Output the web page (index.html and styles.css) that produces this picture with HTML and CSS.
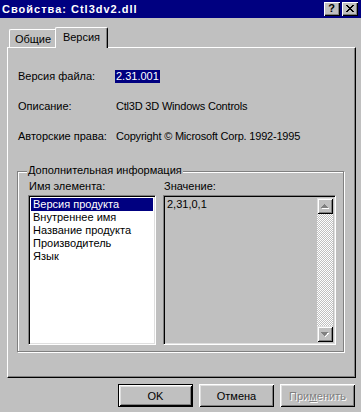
FILE: index.html
```html
<!DOCTYPE html>
<html lang="ru">
<head>
    <meta charset="UTF-8">
    <title>Свойства: Ctl3dv2.dll</title>
    <link rel="stylesheet" href="styles.css">
</head>
<body>
    <div class="dialog">
        <div class="titlebar">
            <span class="title">Свойства: Ctl3dv2.dll</span>
            <div class="caption-buttons">
                <button class="caption-btn help">?</button>
                <button class="caption-btn close">
                    <svg width="8" height="7" viewBox="0 0 8 7" shape-rendering="crispEdges">
                        <path d="M0 0h2v1h-2zM6 0h2v1h-2zM1 1h2v1h-2zM5 1h2v1h-2zM2 2h4v1h-4zM3 3h2v1h-2zM2 4h4v1h-4zM1 5h2v1h-2zM5 5h2v1h-2zM0 6h2v1h-2zM6 6h2v1h-2z" fill="#000"/>
                    </svg>
                </button>
            </div>
        </div>

        <div class="tabs">
            <div class="tab">Общие</div>
            <div class="tab active">Версия</div>
        </div>

        <div class="page">
            <div class="row">
                <span class="label">Версия файла:</span>
                <span class="value selected">2.31.001</span>
            </div>
            <div class="row">
                <span class="label">Описание:</span>
                <span class="value">Ctl3D 3D Windows Controls</span>
            </div>
            <div class="row">
                <span class="label">Авторские права:</span>
                <span class="value">Copyright © Microsoft Corp. 1992-1995</span>
            </div>

            <div class="group">
                <div class="group-title">Дополнительная информация</div>
                <div class="group-body">
                    <div class="col col-names">
                        <div class="col-label">Имя элемента:</div>
                        <ul class="listbox">
                            <li class="active">Версия продукта</li>
                            <li>Внутреннее имя</li>
                            <li>Название продукта</li>
                            <li>Производитель</li>
                            <li>Язык</li>
                        </ul>
                    </div>
                    <div class="col col-values">
                        <div class="col-label">Значение:</div>
                        <div class="valuebox">
                            <div class="value-text">2,31,0,1</div>
                            <div class="scrollbar">
                                <div class="scroll-btn">
                                    <svg width="8" height="5" viewBox="0 0 8 5" shape-rendering="crispEdges">
                                        <path d="M4 1h1v1h1v1h1v1h1v1h-7v-1h6v-1h-1v-1h-1z" fill="#fff"/>
                                        <path d="M3 0h1v1h1v1h1v1h1v1h-7v-1h1v-1h1v-1h1z" fill="#808080"/>
                                    </svg>
                                </div>
                                <div class="scroll-track"></div>
                                <div class="scroll-btn">
                                    <svg width="8" height="5" viewBox="0 0 8 5" shape-rendering="crispEdges">
                                        <path d="M1 1h7v1h-1v1h-1v1h-1v1h-1v-1h1v-1h1v-1h1z" fill="#fff"/>
                                        <path d="M0 0h7v1h-1v1h-1v1h-1v1h-1v-1h-1v-1h-1v-1h-1z" fill="#808080"/>
                                    </svg>
                                </div>
                            </div>
                        </div>
                    </div>
                </div>
            </div>
        </div>

        <div class="buttons">
            <button class="btn default">OK</button>
            <button class="btn">Отмена</button>
            <button class="btn" disabled>При<u>м</u>енить</button>
        </div>
    </div>
</body>
</html>
```

FILE: styles.css
```css
* {
    margin: 0;
    padding: 0;
    box-sizing: border-box;
}

body {
    font-family: "Liberation Sans", Arial, sans-serif;
    font-size: 11px;
    line-height: 13px;
    color: #000000;
    background: #c0c0c0;
}

.dialog {
    width: 361px;
    height: 412px;
    background: #c0c0c0;
}

/* заголовок окна */
.titlebar {
    height: 18px;
    background: #000080;
    display: flex;
    align-items: center;
    padding: 0 3px 0 2px;
}

.title {
    color: #ffffff;
    font-weight: bold;
    letter-spacing: 1px;
    flex-grow: 1;
}

.caption-buttons {
    display: flex;
    gap: 2px;
}

.caption-btn {
    width: 16px;
    height: 14px;
    background: #c0c0c0;
    border: none;
    box-shadow: inset 1px 1px #ffffff, inset -1px -1px #000000, inset -2px -2px #808080;
    display: flex;
    align-items: center;
    justify-content: center;
    font-family: "Liberation Sans", Arial, sans-serif;
    font-weight: bold;
    font-size: 11px;
    line-height: 11px;
    padding: 0 1px 1px 0;
}

/* вкладки */
.tabs {
    display: flex;
    align-items: flex-end;
    height: 20px;
    margin-top: 9px;
    padding-left: 9px;
}

.tab {
    width: 48px;
    height: 18px;
    padding-top: 3px;
    text-align: center;
    border-top: 1px solid #ffffff;
    border-left: 1px solid #ffffff;
    border-right: 1px solid #000000;
    border-radius: 2px 2px 0 0;
    box-shadow: inset -1px 0 #808080;
}

.tab.active {
    width: 53px;
    height: 21px;
    margin-left: -2px;
    margin-bottom: -1px;
    padding-top: 3px;
    background: #c0c0c0;
    position: relative;
    z-index: 1;
}

/* страница свойств */
.page {
    width: 349px;
    height: 331px;
    margin-left: 7px;
    padding: 22px 0 0 9px;
    border: 1px solid;
    border-color: #ffffff #000000 #000000 #ffffff;
    box-shadow: inset -1px -1px #808080;
}

.row {
    display: flex;
    height: 13px;
    padding-left: 1px;
    margin-bottom: 17px;
}

.label {
    width: 97px;
    flex-shrink: 0;
}

.value {
    padding: 0 1px;
    white-space: nowrap;
    letter-spacing: -0.2px;
}

.value.selected {
    background: #000080;
    color: #ffffff;
    height: 13px;
    letter-spacing: 0;
}

/* группа */
.group {
    width: 327px;
    margin-top: 28px;
    padding: 0 7px 6px 10px;
    border: 1px solid #808080;
    box-shadow: inset 1px 1px #ffffff, 1px 1px #ffffff;
}

.group-title {
    width: fit-content;
    margin: -8px 0 3px -1px;
    padding: 0 1px;
    background: #c0c0c0;
}

.group-body {
    display: flex;
    gap: 7px;
}

.col-label {
    padding-left: 1px;
    margin-bottom: 2px;
}

.col-names {
    width: 128px;
}

.col-values {
    width: 173px;
}

.listbox,
.valuebox {
    height: 150px;
    border: 1px solid;
    border-color: #808080 #ffffff #ffffff #808080;
    box-shadow: inset 1px 1px #000000, inset -1px -1px #dfdfdf;
    padding: 2px;
}

.listbox {
    list-style: none;
    background: #ffffff;
    padding-top: 2px;
}

.listbox li {
    height: 13px;
    padding-left: 2px;
    white-space: nowrap;
}

.listbox li.active {
    background: #000080;
    color: #ffffff;
}

.valuebox {
    display: flex;
    background: #c0c0c0;
}

.value-text {
    flex-grow: 1;
    padding: 0 0 0 1px;
}

.scrollbar {
    width: 16px;
    display: flex;
    flex-direction: column;
}

.scroll-btn {
    height: 16px;
    background: #c0c0c0;
    box-shadow: inset 1px 1px #dfdfdf, inset -1px -1px #000000, inset 2px 2px #ffffff, inset -2px -2px #808080;
    display: flex;
    align-items: center;
    justify-content: center;
}

.scroll-track {
    flex-grow: 1;
    background: repeating-conic-gradient(#ffffff 0 25%, #c0c0c0 0 50%) 0 0 / 2px 2px;
}

/* кнопки диалога */
.buttons {
    display: flex;
    justify-content: flex-end;
    gap: 6px;
    margin-top: 6px;
    padding-right: 6px;
}

.btn {
    width: 75px;
    height: 23px;
    background: #c0c0c0;
    border: none;
    font-family: inherit;
    font-size: 11px;
    color: #000000;
    box-shadow: inset 1px 1px #ffffff, inset -1px -1px #000000, inset 2px 2px #dfdfdf, inset -2px -2px #808080;
}

.btn.default {
    border: 1px solid #000000;
}

.btn:disabled {
    color: #808080;
    text-shadow: 1px 1px #ffffff;
}
```
